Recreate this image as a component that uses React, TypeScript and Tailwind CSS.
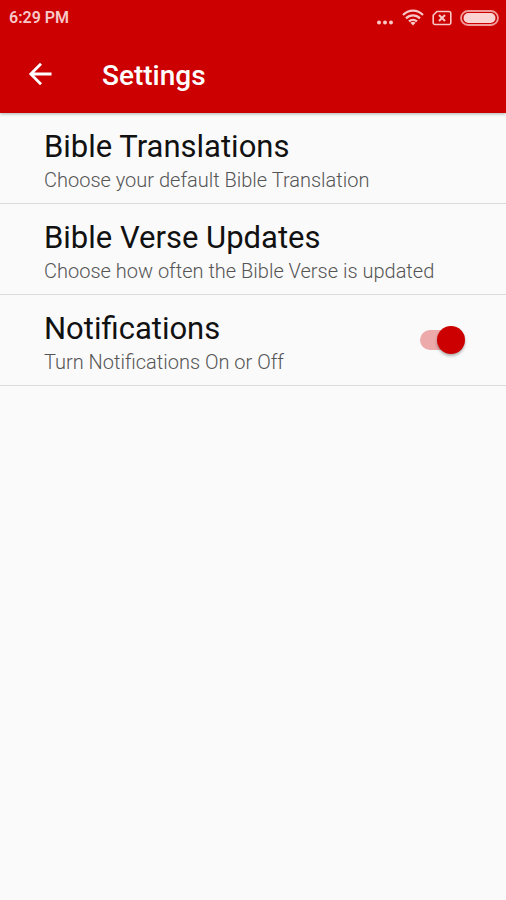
import React, { useState } from "react";

const StatusIcons = () => (
  <div className="flex items-center text-[#f8c8c8]">
    <svg width="18" height="18" viewBox="0 0 18 18" fill="currentColor">
      <circle cx="3" cy="13.5" r="2" />
      <circle cx="9" cy="13.5" r="2" />
      <circle cx="15" cy="13.5" r="2" />
    </svg>
    <svg
      className="ml-2"
      width="22"
      height="18"
      viewBox="0 0 22 18"
      fill="none"
      stroke="currentColor"
      strokeWidth="2.2"
    >
      <path d="M1 6C6.6 0.2 15.4 0.2 21 6" />
      <path d="M4 9.4C8 5.4 14 5.4 18 9.4" />
      <path d="M7 12.4C9.3 10.2 12.7 10.2 15 12.4" />
      <path d="M8.4 13.8L11 16.6L13.6 13.8C12 12.4 10 12.4 8.4 13.8Z" fill="currentColor" stroke="none" />
    </svg>
    <svg
      className="ml-2"
      width="20"
      height="16"
      viewBox="0 0 20 16"
      fill="none"
      stroke="currentColor"
      strokeWidth="1.6"
    >
      <path d="M5 1.5H17A1.8 1.8 0 0 1 18.8 3.3V12.7A1.8 1.8 0 0 1 17 14.5H3A1.8 1.8 0 0 1 1.2 12.7V5.3Z" />
      <path d="M7 5L13 11M13 5L7 11" strokeWidth="2" />
    </svg>
    <svg className="ml-2" width="39" height="16" viewBox="0 0 39 16">
      <rect x="1" y="1" width="37" height="14" rx="7" fill="none" stroke="#f09a9a" strokeWidth="1.8" />
      <rect x="3.5" y="3" width="32" height="10" rx="5" fill="#fbd3d3" />
    </svg>
  </div>
);

type SettingTextProps = {
  title: string;
  description: string;
};

const SettingText = ({ title, description }: SettingTextProps) => (
  <span className="flex flex-col pt-4 pb-[7px]">
    <span className="text-[31px] leading-9 text-[#111111]">{title}</span>
    <span className="text-[20px] leading-[31px] font-light text-[#555555]">
      {description}
    </span>
  </span>
);

const App = () => {
  const [notifications, setNotifications] = useState(true);

  return (
    <div className="min-h-screen bg-[#fafafa] font-['Roboto','Liberation_Sans',sans-serif]">
      <header className="relative bg-[#cc0000] pb-px shadow-[0_1px_3px_rgba(0,0,0,0.3)]">
        <div className="flex h-9 items-center justify-between pl-[9px] pr-[7px]">
          <span className="text-[16px] font-semibold text-[#f8c8c8]">6:29 PM</span>
          <StatusIcons />
        </div>
        <div className="flex h-19 items-center pl-7">
          <button type="button" aria-label="Back" className="text-white">
            <svg
              width="24"
              height="24"
              viewBox="0 0 24 24"
              fill="none"
              stroke="currentColor"
              strokeWidth="2.8"
            >
              <path d="M23.5 12H3M13 1.8L2.8 12L13 22.2" />
            </svg>
          </button>
          <h1 className="ml-[50px] pt-1 text-[28px] font-medium text-white">
            Settings
          </h1>
        </div>
      </header>

      <main>
        <ul>
          <li className="border-b border-[#dadada]">
            <button type="button" className="block w-full px-11 text-left">
              <SettingText
                title="Bible Translations"
                description="Choose your default Bible Translation"
              />
            </button>
          </li>
          <li className="border-b border-[#dadada]">
            <button type="button" className="block w-full px-11 text-left">
              <SettingText
                title="Bible Verse Updates"
                description="Choose how often the Bible Verse is updated"
              />
            </button>
          </li>
          <li className="border-b border-[#dadada]">
            <label className="flex w-full items-center justify-between pl-11 pr-11">
              <SettingText
                title="Notifications"
                description="Turn Notifications On or Off"
              />
              <input
                type="checkbox"
                role="switch"
                checked={notifications}
                onChange={(e) => setNotifications(e.target.checked)}
                className="relative h-5 w-[42px] appearance-none rounded-full bg-[#bdbdbd] checked:bg-[#ecaaaa] before:absolute before:-top-1 before:left-0 before:size-7 before:rounded-full before:bg-[#f1f1f1] before:shadow-[0_2px_3px_rgba(0,0,0,0.3)] checked:before:left-[17px] checked:before:bg-[#cc0000]"
              />
            </label>
          </li>
        </ul>
      </main>
    </div>
  );
};

export default App;
